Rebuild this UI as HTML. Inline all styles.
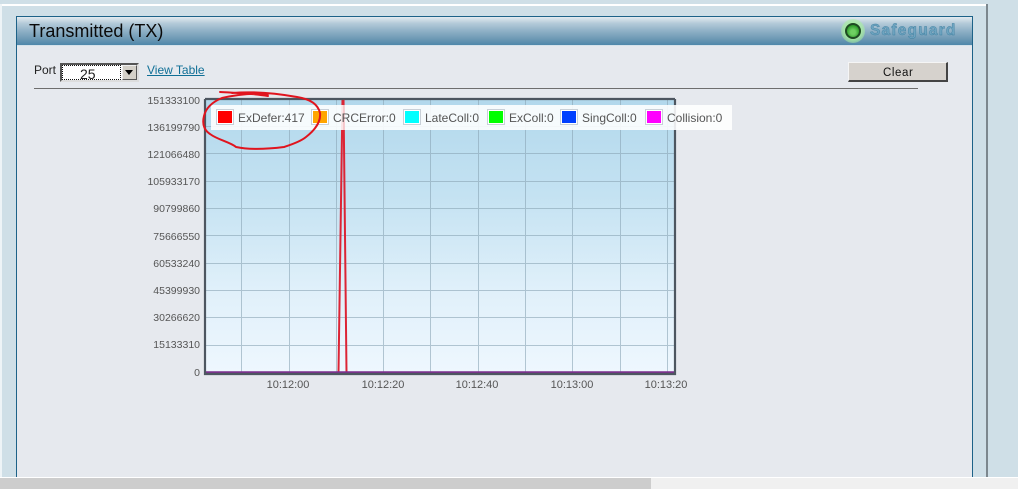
<!DOCTYPE html>
<html><head><meta charset="utf-8">
<style>
html,body{margin:0;padding:0;width:1018px;height:489px;overflow:hidden;background:#cfdfe7;font-family:"Liberation Sans",sans-serif}
.a{position:absolute}
.t{position:absolute;white-space:nowrap;line-height:14px}
</style></head><body>
<div class="a" style="left:0;top:0;width:1018px;height:489px;overflow:hidden">
<div class="a" style="left:0;top:4px;width:986px;height:2px;background:#fff"></div>
<div class="a" style="left:0;top:4px;width:2px;height:474px;background:#eef4f7"></div>
<div class="a" style="left:986px;top:4px;width:2px;height:474px;background:#7c878e"></div>
<div class="a" style="left:16px;top:16px;width:955px;height:462px;border:1px solid #1d6288;border-bottom:0;background:#e6e9ee"></div>
<div class="a" style="left:17px;top:17px;width:955px;height:28px;background:linear-gradient(#e3ebf0 0%,#b5cbd9 22%,#8fb0c6 50%,#6b97b3 80%,#4f87aa 100%)"></div>
<div class="a" style="left:17px;top:45px;width:955px;height:1px;background:#d5e2ea"></div>
<div class="t" style="left:29px;top:22px;font-size:18px;line-height:18px;color:#0a0a0a">Transmitted (TX)</div>

<div class="a" style="left:841px;top:19px;width:24px;height:24px;border-radius:50%;background:radial-gradient(circle,rgba(170,240,160,.9) 0 45%,rgba(170,240,160,0) 100%)"></div>
<div class="a" style="left:845px;top:23px;width:16px;height:16px;box-sizing:border-box;border:2px solid #1f4a24;border-radius:50%;background:radial-gradient(circle at 50% 60%,#6fd062 0 25%,#2f9e2c 70%,#1c7a20 100%)"></div>
<div class="t" style="left:870px;top:22px;font-size:15.5px;line-height:17px;font-weight:bold;color:#6ea4c0;letter-spacing:1.2px;-webkit-text-stroke:.4px #3f7f9f">Safeguard</div>

<div class="t" style="left:34px;top:63px;font-size:12px;color:#222">Port</div>
<div class="a" style="left:60px;top:63px;width:79px;height:19px;box-sizing:border-box;border:2px solid;border-color:#555 #ddd #ddd #555;background:#fff"></div>
<div class="a" style="left:62px;top:65px;width:59px;height:15px;box-sizing:border-box;border:1px dotted #111"></div>
<div class="t" style="left:80px;top:67px;font-size:14px;color:#222">25</div>
<div class="a" style="left:122px;top:65px;width:15px;height:15px;background:#d4d0c8;box-sizing:border-box;border:1px solid;border-color:#eee #555 #555 #eee"></div>
<div class="a" style="left:125px;top:70px;width:0;height:0;border-left:4.500px solid transparent;border-right:4.500px solid transparent;border-top:5px solid #000"></div>
<div class="t" style="left:147px;top:63px;font-size:12px;color:#0f6f96;text-decoration:underline">View Table</div>
<div class="a" style="left:848px;top:62px;width:100px;height:20px;box-sizing:border-box;background:#d6d2cd;border:1px solid;border-color:#f5f5f5 #444 #444 #f5f5f5;border-bottom-width:2px;border-right-width:2px"></div>
<div class="t" style="left:883px;top:66px;font-size:11.5px;color:#111;letter-spacing:.6px">Clear</div>
<div class="a" style="left:34px;top:88px;width:884px;height:1px;background:#6e6e6e"></div>

<svg class="a" style="left:0;top:0" width="1018" height="489" xmlns="http://www.w3.org/2000/svg">
<defs><linearGradient id="g" x1="0" y1="0" x2="0" y2="1">
<stop offset="0" stop-color="#b2d8ec"/><stop offset=".35" stop-color="#c4e2f2"/><stop offset=".7" stop-color="#e0f0fa"/><stop offset="1" stop-color="#eef7fe"/>
</linearGradient></defs>
<rect x="205" y="99" width="470" height="274" fill="url(#g)"/>
<g stroke="#8aa5b5" stroke-width="1" opacity=".6" fill="none">
<path d="M241.5 99V373M289.5 99V373M336.5 99V373M383.5 99V373M430.5 99V373M478.5 99V373M525.5 99V373M572.5 99V373M620.5 99V373M667.5 99V373"/>
<path d="M205 126.500H675M205 153.500H675M205 181.500H675M205 208.500H675M205 235.500H675M205 263.500H675M205 290.500H675M205 317.500H675M205 345.500H675"/>
</g>
<path d="M338.500 372L342.500 99M343.500 99L346.500 372" stroke="#dc2435" stroke-width="2" fill="none"/>
<path d="M206 372.500H675" stroke="#7c2f8e" stroke-width="2.500"/>
<path d="M205 99V374H675V99" fill="none" stroke="#4d5660" stroke-width="2.200"/>
<path d="M205 99H675" fill="none" stroke="#4d5660" stroke-width="2.200"/>
<rect x="211" y="105" width="521" height="25" fill="#fff" fill-opacity=".88"/>
<g stroke="#c8d0d8" stroke-width="1">
<rect x="216.500" y="109.500" width="17" height="15" fill="#fff"/>
<rect x="311.500" y="109.500" width="17" height="15" fill="#fff"/>
<rect x="403.500" y="109.500" width="17" height="15" fill="#fff"/>
<rect x="487.500" y="109.500" width="17" height="15" fill="#fff"/>
<rect x="560.500" y="109.500" width="17" height="15" fill="#fff"/>
<rect x="645.500" y="109.500" width="17" height="15" fill="#fff"/>
</g>
<rect x="218" y="111" width="14" height="12" fill="#f00"/>
<rect x="313" y="111" width="14" height="12" fill="#ffa500"/>
<rect x="405" y="111" width="14" height="12" fill="#0ff"/>
<rect x="489" y="111" width="14" height="12" fill="#0f0"/>
<rect x="562" y="111" width="14" height="12" fill="#0040ff"/>
<rect x="647" y="111" width="14" height="12" fill="#f0f"/>
<path d="M344 99V130" stroke="#dc2435" stroke-width="1.200" opacity=".25"/>
<path d="M220 92C236 93 250 93 268 96M232 93C255 91 280 94 297 97C310 99 318 104 320 113C321 122 315 130 306 137C300 142 290 145 284 147C268 149 250 150 236 147C230 142 218 140 210 134C204 130 202 124 204 116C206 108 212 102 222 98C235 95 252 93 268 94" fill="none" stroke="#e0141e" stroke-width="2" stroke-linecap="round"/>
<g font-family="Liberation Sans, sans-serif" font-size="12" fill="#555">
<text x="238" y="122">ExDefer:417</text>
<text x="333" y="122">CRCError:0</text>
<text x="425" y="122">LateColl:0</text>
<text x="509" y="122">ExColl:0</text>
<text x="582" y="122">SingColl:0</text>
<text x="667" y="122">Collision:0</text>
</g>
<g font-family="Liberation Sans, sans-serif" font-size="10.500" fill="#555" text-anchor="end">
<text x="200" y="104">151333100</text>
<text x="200" y="131">136199790</text>
<text x="200" y="158">121066480</text>
<text x="200" y="185">105933170</text>
<text x="200" y="212">90799860</text>
<text x="200" y="240">75666550</text>
<text x="200" y="267">60533240</text>
<text x="200" y="294">45399930</text>
<text x="200" y="321">30266620</text>
<text x="200" y="348">15133310</text>
<text x="200" y="376">0</text>
</g>
<g font-family="Liberation Sans, sans-serif" font-size="11" fill="#555" text-anchor="middle">
<text x="288" y="388">10:12:00</text>
<text x="383" y="388">10:12:20</text>
<text x="477" y="388">10:12:40</text>
<text x="572" y="388">10:13:00</text>
<text x="666" y="388">10:13:20</text>
</g>
</svg>

<div class="a" style="left:0;top:477px;width:1018px;height:1px;background:#fff"></div>
<div class="a" style="left:0;top:478px;width:1018px;height:11px;background:#f0f0f0"></div>
<div class="a" style="left:0;top:478px;width:651px;height:11px;background:#cdcdcd"></div>
</div>
</body></html>
